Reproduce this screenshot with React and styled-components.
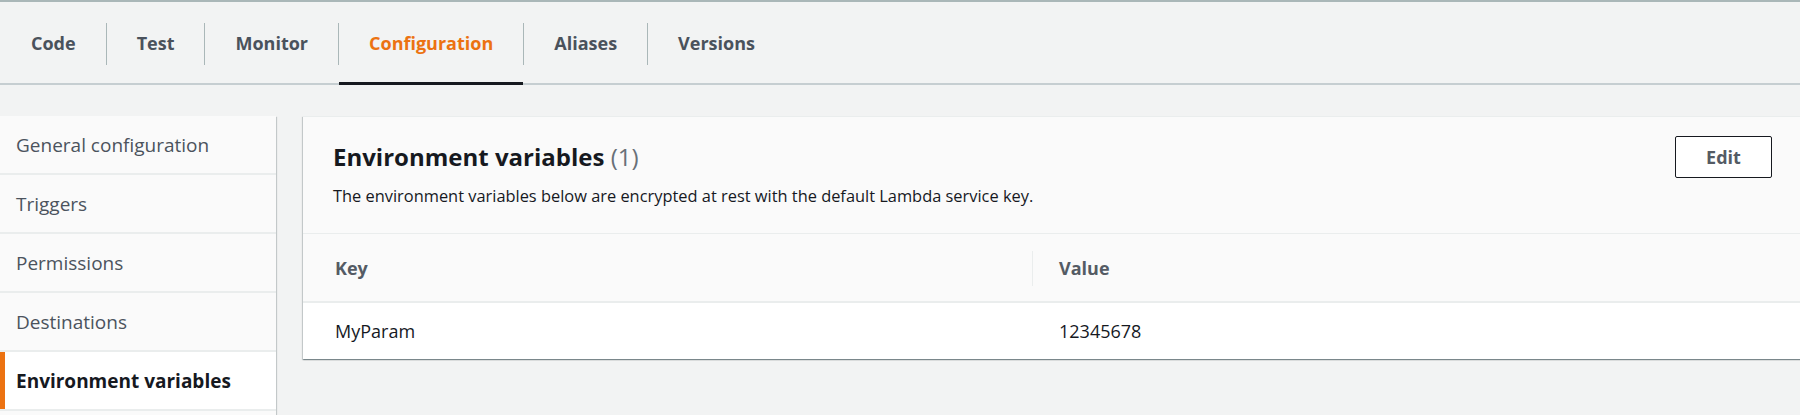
import React from "react";
import styled, { createGlobalStyle } from "styled-components";

const GlobalStyle = createGlobalStyle`
  html, body {
    margin: 0;
    padding: 0;
    overflow: hidden;
    background: #f2f3f3;
    font-family: "Open Sans", "Noto Sans", sans-serif;
  }
`;

const Page = styled.div`
  width: 1800px;
  height: 415px;
  overflow: hidden;
  background: #f2f3f3;
`;

const TabBar = styled.div`
  display: flex;
  height: 81px;
  padding-left: 1px;
  border-top: 2px solid #aab7b8;
  border-bottom: 2px solid #c6ced1;
`;

const Tab = styled.div`
  position: relative;
  display: flex;
  align-items: center;
  padding: 0 30px;
  font-size: 18px;
  font-weight: 700;
  color: ${(p) => (p.$active ? "#ec7211" : "#4a525c")};

  &:not(:first-child) {
    padding-left: 31px;
  }

  &:not(:first-child)::before {
    content: "";
    position: absolute;
    left: 0;
    top: 21px;
    bottom: 18px;
    width: 1px;
    background: #aab7b8;
  }

  ${(p) =>
    p.$active &&
    `
    &::after {
      content: "";
      position: absolute;
      left: 1px;
      right: 0;
      bottom: -2px;
      height: 3px;
      background: #16191f;
    }
  `}
`;

const Content = styled.div`
  display: flex;
  align-items: flex-start;
  gap: 27px;
  padding-top: 31px;
`;

const Nav = styled.div`
  width: 276px;
  flex-shrink: 0;
  padding-bottom: 12px;
  background: #fafafa;
  box-shadow: 0 1px 1px 0 rgba(0, 28, 36, 0.3), 1px 1px 1px 0 rgba(0, 28, 36, 0.15);
`;

const NavItem = styled.div`
  position: relative;
  display: flex;
  align-items: center;
  height: 57px;
  padding-left: 16px;
  border-bottom: 2px solid #eaeded;
  font-size: 19px;
  font-weight: ${(p) => (p.$active ? 700 : 400)};
  color: ${(p) => (p.$active ? "#16191f" : "#4b535d")};
  background: ${(p) => (p.$active ? "#ffffff" : "transparent")};

  ${(p) =>
    p.$active &&
    `
    &::before {
      content: "";
      position: absolute;
      left: 0;
      top: 0;
      bottom: 0;
      width: 5px;
      background: #ec7211;
    }
  `}
`;

const Panel = styled.div`
  flex: 1;
  margin-right: -4px;
  background: #fafafa;
  border-top: 1px solid #eaeded;
  box-shadow: 0 1px 1px 0 rgba(0, 28, 36, 0.3), 1px 1px 1px 0 rgba(0, 28, 36, 0.15),
    -1px 1px 1px 0 rgba(0, 28, 36, 0.15);
`;

const PanelHeader = styled.div`
  display: flex;
  justify-content: space-between;
  align-items: flex-start;
  padding: 19px 32px 26px 30px;
  border-bottom: 1px solid #eaeded;
`;

const TitleBlock = styled.div`
  display: flex;
  flex-direction: column;
  gap: 12px;
  padding-top: 5px;
`;

const Title = styled.h2`
  margin: 0;
  font-size: 24px;
  line-height: 32px;
  font-weight: 700;
  color: #16191f;
`;

const Count = styled.span`
  font-weight: 400;
  color: #687078;
`;

const Description = styled.p`
  margin: 0;
  font-size: 16.4px;
  line-height: 22px;
  color: #16191f;
`;

const EditButton = styled.button`
  width: 97px;
  height: 42px;
  border: 1px solid #16191f;
  border-radius: 2px;
  background: #ffffff;
  font-family: inherit;
  font-size: 18px;
  font-weight: 700;
  color: #545b64;
`;

const Row = styled.div`
  display: grid;
  grid-template-columns: 729px 1fr;
  align-items: center;
  height: ${(p) => (p.$head ? "67px" : "56px")};
  background: ${(p) => (p.$head ? "#fafafa" : "#ffffff")};
  border-bottom: ${(p) => (p.$head ? "2px solid #eaeded" : "none")};
`;

const Cell = styled.div`
  position: relative;
  height: 100%;
  display: flex;
  align-items: center;
  padding-left: ${(p) => (p.$first ? "32px" : "27px")};
  font-size: 18px;
  font-weight: ${(p) => (p.$head ? 700 : 400)};
  color: ${(p) => (p.$head ? "#545b64" : "#16191f")};

  ${(p) =>
    p.$head &&
    !p.$first &&
    `
    &::before {
      content: "";
      position: absolute;
      left: 0;
      top: 17px;
      height: 35px;
      width: 1px;
      background: #eaeded;
    }
  `}
`;

const tabs = ["Code", "Test", "Monitor", "Configuration", "Aliases", "Versions"];
const navItems = [
  "General configuration",
  "Triggers",
  "Permissions",
  "Destinations",
  "Environment variables",
];

export default function App() {
  return (
    <Page>
      <GlobalStyle />
      <TabBar>
        {tabs.map((t) => (
          <Tab key={t} $active={t === "Configuration"}>
            {t}
          </Tab>
        ))}
      </TabBar>
      <Content>
        <Nav>
          {navItems.map((n) => (
            <NavItem key={n} $active={n === "Environment variables"}>
              {n}
            </NavItem>
          ))}
        </Nav>
        <Panel>
          <PanelHeader>
            <TitleBlock>
              <Title>
                Environment variables <Count>(1)</Count>
              </Title>
              <Description>
                The environment variables below are encrypted at rest with the default Lambda service key.
              </Description>
            </TitleBlock>
            <EditButton>Edit</EditButton>
          </PanelHeader>
          <Row $head>
            <Cell $head $first>
              Key
            </Cell>
            <Cell $head>Value</Cell>
          </Row>
          <Row>
            <Cell $first>MyParam</Cell>
            <Cell>12345678</Cell>
          </Row>
        </Panel>
      </Content>
    </Page>
  );
}
